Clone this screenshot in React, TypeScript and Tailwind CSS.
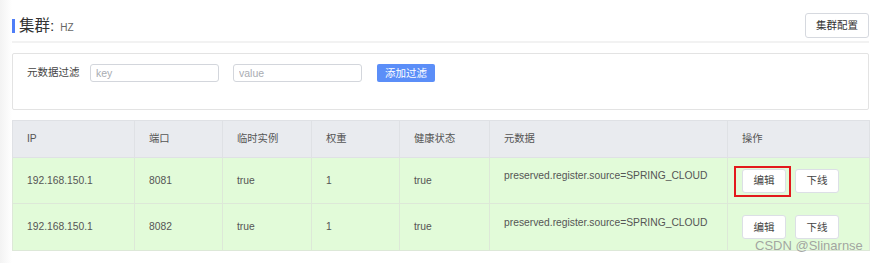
import React from 'react';

// 实例列表 - 两条 SPRING_CLOUD 注册的实例
const ROWS = [
  { ip: '192.168.150.1', port: '8081', ephemeral: 'true', weight: '1', healthy: 'true', meta: 'preserved.register.source=SPRING_CLOUD', marked: true },
  { ip: '192.168.150.1', port: '8082', ephemeral: 'true', weight: '1', healthy: 'true', meta: 'preserved.register.source=SPRING_CLOUD', marked: false },
];

const COLUMNS = [
  { title: 'IP', width: 122 },
  { title: '端口', width: 88 },
  { title: '临时实例', width: 89 },
  { title: '权重', width: 88 },
  { title: '健康状态', width: 90 },
  { title: '元数据', width: 238 },
  { title: '操作', width: 142 },
];

function SmallButton({ children }: { children: React.ReactNode }) {
  return (
    <button className="w-[44px] h-[24px] bg-white border border-[#dcdfe6] rounded-[3px] text-[10.5px] text-[#444] leading-none">
      {children}
    </button>
  );
}

export default function App() {
  return (
    <div
      className="relative w-[877px] h-[263px] overflow-hidden bg-[linear-gradient(to_right,#f3f3f3,#ffffff_12px)] text-[#555]"
      style={{ fontFamily: '"Liberation Sans", "Noto Sans CJK SC", sans-serif' }}
    >
      {/* 标题栏 */}
      <div className="flex justify-between items-start pl-[12px] pr-[8px] pt-[13px]">
        <div className="flex items-center h-[25px] pt-[1px]">
          <span className="w-[3px] h-[14px] bg-[#4f7ef8]" />
          <span className="ml-[4px] text-[15.5px] text-[#333] leading-none">集群:</span>
          <span className="ml-[6px] mt-[3px] text-[10px] text-[#666] leading-none">HZ</span>
        </div>
        <button className="w-[64px] h-[25px] bg-white border border-[#d6d9df] rounded-[3px] text-[10.5px] text-[#333] leading-none">
          集群配置
        </button>
      </div>

      <div className="mt-[3px] ml-[12px] mr-[8px] h-[2px] bg-[#f2f2f2]" />

      {/* 元数据过滤 */}
      <div className="mt-[10px] ml-[12px] mr-[8px] h-[57px] border border-[#e3e3e3] rounded-[2px] pt-[10px] pl-[14px]">
        <div className="flex items-center h-[18px]">
          <span className="w-[63px] text-[10.5px] text-[#444]">元数据过滤</span>
          <input
            placeholder="key"
            className="w-[129px] h-[18px] border border-[#d3d6dc] rounded-[3px] px-[5px] text-[10.5px] placeholder:text-[#a9acb2] outline-none"
          />
          <input
            placeholder="value"
            className="ml-[14px] w-[129px] h-[18px] border border-[#d3d6dc] rounded-[3px] px-[5px] text-[10.5px] placeholder:text-[#a9acb2] outline-none"
          />
          <button className="ml-[15px] w-[58px] h-[18px] bg-[#5b8ef8] rounded-[2px] text-white text-[10.5px] leading-none">
            添加过滤
          </button>
        </div>
      </div>

      {/* 实例表格 */}
      <div className="mt-[10px] ml-[12px] mr-[8px]">
        <table className="w-full table-fixed border-collapse text-[10.3px]">
          <colgroup>
            {COLUMNS.map((c) => (
              <col key={c.title} style={{ width: c.width }} />
            ))}
          </colgroup>
          <thead>
            <tr className="h-[37px] bg-[#e9ebef]">
              {COLUMNS.map((c) => (
                <th key={c.title} className="border border-[#dfe1e5] pl-[14px] text-left font-normal text-[#555]">
                  {c.title}
                </th>
              ))}
            </tr>
          </thead>
          <tbody>
            {ROWS.map((r, i) => (
              <tr key={r.port} className={`bg-[#e2fbd9] ${i === 0 ? 'h-[46px]' : 'h-[47px]'}`}>
                <td className="border border-[#dde8d8] pl-[14px]">{r.ip}</td>
                <td className="border border-[#dde8d8] pl-[14px]">{r.port}</td>
                <td className="border border-[#dde8d8] pl-[14px]">{r.ephemeral}</td>
                <td className="border border-[#dde8d8] pl-[14px]">{r.weight}</td>
                <td className="border border-[#dde8d8] pl-[14px]">{r.healthy}</td>
                <td className="border border-[#dde8d8] pl-[14px] pb-[9px] whitespace-nowrap">{r.meta}</td>
                <td className="border border-[#dde8d8] pl-[14px]">
                  <div className="flex items-center gap-[9px]">
                    <div className="relative">
                      <SmallButton>编辑</SmallButton>
                      {r.marked && (
                        <span className="absolute left-[-8px] right-[-5px] top-[-3px] bottom-[-4px] border-2 border-[#e3191c] pointer-events-none" />
                      )}
                    </div>
                    <SmallButton>下线</SmallButton>
                  </div>
                </td>
              </tr>
            ))}
          </tbody>
        </table>
      </div>

      {/* 水印 */}
      <span className="absolute left-[755px] top-[239px] text-[13px] text-[#9a9a9a]/90 leading-none">
        CSDN @Slinarnse
      </span>
    </div>
  );
}
